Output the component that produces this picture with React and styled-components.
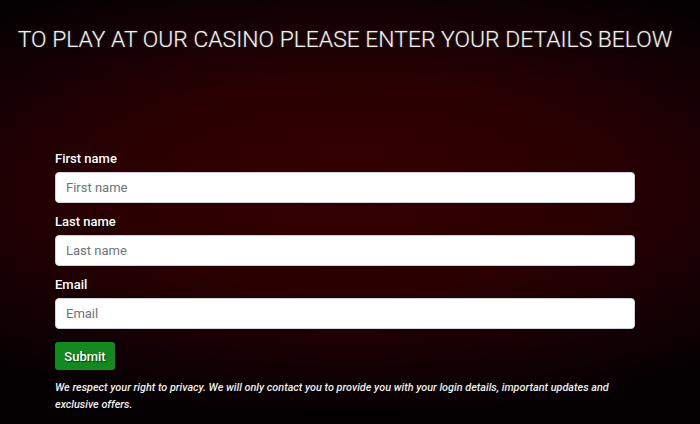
import styled, { createGlobalStyle } from "styled-components";

const Global = createGlobalStyle`
    html, body {
        margin: 0;
        padding: 0;
        background: #000;
    }
    * {
        box-sizing: border-box;
    }
`

const Page = styled.div`
    width: 700px;
    height: 424px;
    overflow: hidden;
    font-family: Roboto, "Liberation Sans", sans-serif;
    color: #fff;
    background: radial-gradient(ellipse 560px 230px at 350px 190px, #360000 0%, #2a0002 45%, #120004 80%, #050002 100%);
    padding-top: 26px;
`

const Title = styled.h1`
    margin: 0 0 0 -10px;
    text-align: center;
    font-size: 22.9px;
    font-weight: 300;
    line-height: 28px;
    white-space: nowrap;
    text-transform: uppercase;
    color: #f2f2f2;
    text-shadow: 0 0 2px rgba(255, 255, 255, 0.35), 1px 1px 1px rgba(0, 0, 0, 0.8);
`

const Form = styled.form`
    width: 580px;
    margin: 96px 0 0 55px;
    display: flex;
    flex-direction: column;
`

const Field = styled.div`
    display: flex;
    flex-direction: column;
    margin-bottom: 10px;
`

const Label = styled.label`
    font-size: 13px;
    font-weight: 500;
    line-height: 17px;
    margin-bottom: 5px;
    text-shadow: 1px 1px 1px rgba(0, 0, 0, 0.9);
`

const Input = styled.input`
    height: 31px;
    width: 100%;
    border: 1px solid #ced4da;
    border-radius: 4px;
    background: #fff;
    padding: 0 10px;
    font-family: Roboto, "Liberation Sans", sans-serif;
    font-size: 13px;
    color: #495057;
    outline: none;
    &::placeholder {
        color: #6c757d;
    }
`

const Submit = styled.button`
    align-self: flex-start;
    margin-top: 3px;
    height: 28px;
    width: 60px;
    padding: 0;
    border: 0;
    border-radius: 3px;
    background: #128a1d;
    color: #fff;
    font-family: Roboto, "Liberation Sans", sans-serif;
    font-size: 13px;
    font-weight: 500;
    text-shadow: 1px 1px 1px rgba(0, 0, 0, 0.6);
    cursor: pointer;
`

const Note = styled.p`
    margin: 9px 0 0;
    width: 575px;
    font-size: 10.85px;
    font-style: italic;
    font-weight: 500;
    line-height: 17px;
    color: #f0f0f0;
    text-shadow: 1px 1px 1px rgba(0, 0, 0, 0.9);
`

export default function App() {
    const fields = [
        { id: "first", label: "First name", type: "text" },
        { id: "last", label: "Last name", type: "text" },
        { id: "email", label: "Email", type: "email" },
    ];

    return (
        <Page>
            <Global />
            <Title>To play at our casino please enter your details below</Title>
            <Form onSubmit={(e) => e.preventDefault()}>
                {fields.map((f) => (
                    <Field key={f.id}>
                        <Label htmlFor={f.id}>{f.label}</Label>
                        <Input id={f.id} type={f.type} placeholder={f.label} />
                    </Field>
                ))}
                <Submit type="submit">Submit</Submit>
                <Note>
                    We respect your right to privacy. We will only contact you to provide you with your login details, important updates and exclusive offers.
                </Note>
            </Form>
        </Page>
    );
}
